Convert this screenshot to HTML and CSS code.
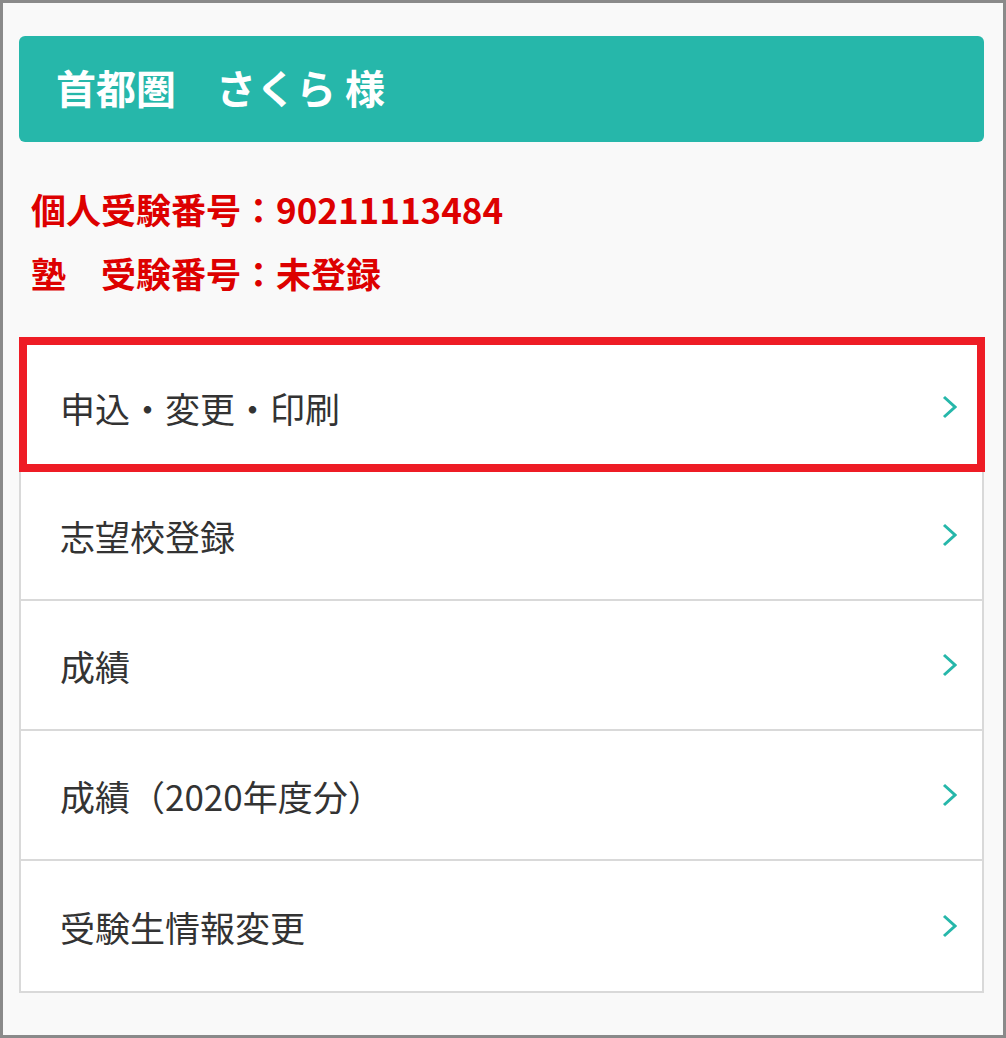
FILE: index.html
```
<!DOCTYPE html>
<html lang="ja">
<head>
    <meta charset="UTF-8">
    <meta name="viewport" content="width=device-width, initial-scale=1.0">
    <title>マイページ</title>
    <link rel="stylesheet" href="styles.css">
</head>
<body>
    <div class="page">
        <div class="user-header">首都圏　さくら 様</div>

        <div class="exam-info">
            <p>個人受験番号：90211113484</p>
            <p>塾　受験番号：未登録</p>
        </div>

        <ul class="menu">
            <li class="menu-item selected">
                <span>申込・変更・印刷</span>
                <svg class="chevron" width="15" height="24" viewBox="0 0 15 24"><polyline points="2,2 13,12 2,22" /></svg>
            </li>
            <li class="menu-item">
                <span>志望校登録</span>
                <svg class="chevron" width="15" height="24" viewBox="0 0 15 24"><polyline points="2,2 13,12 2,22" /></svg>
            </li>
            <li class="menu-item">
                <span>成績</span>
                <svg class="chevron" width="15" height="24" viewBox="0 0 15 24"><polyline points="2,2 13,12 2,22" /></svg>
            </li>
            <li class="menu-item">
                <span>成績（2020年度分）</span>
                <svg class="chevron" width="15" height="24" viewBox="0 0 15 24"><polyline points="2,2 13,12 2,22" /></svg>
            </li>
            <li class="menu-item">
                <span>受験生情報変更</span>
                <svg class="chevron" width="15" height="24" viewBox="0 0 15 24"><polyline points="2,2 13,12 2,22" /></svg>
            </li>
        </ul>
    </div>
</body>
</html>
```

FILE: styles.css
```
html, body {
    margin: 0;
    padding: 0;
}

body {
    font-family: "Noto Sans CJK JP", "Noto Sans", sans-serif;
    background-color: #f9f9f9;
    border: 3px solid #8a8a8a;
    box-sizing: border-box;
    height: 1038px;
    overflow: hidden;
}

.page {
    padding: 33px 19px 0 16px;
}

.user-header {
    background-color: #26b7aa;
    color: #ffffff;
    border-radius: 6px;
    height: 106px;
    box-sizing: border-box;
    display: flex;
    align-items: center;
    padding: 0 0 4px 37px;
    font-size: 40px;
    font-weight: bold;
    line-height: 1;
}

.exam-info {
    margin-top: 35px;
    padding-left: 12px;
}

.exam-info p {
    margin: 0;
    color: #dd0000;
    font-size: 35px;
    font-weight: bold;
    line-height: 64px;
}

.menu {
    list-style: none;
    margin: 36px 0 0 0;
    padding: 0;
    border: 2px solid #d9d9d9;
    background-color: #ffffff;
}

.menu-item {
    position: relative;
    height: 128px;
    box-sizing: border-box;
    display: flex;
    align-items: center;
    justify-content: space-between;
    padding: 0 25px 0 39px;
    border-bottom: 2px solid #d9d9d9;
    font-size: 35px;
    color: #333333;
    line-height: 1;
}

.menu-item:last-child {
    border-bottom: none;
    height: 128px;
}

.menu-item + .menu-item {
    height: 130px;
}

.menu-item.selected {
    padding-top: 2px;
}

.menu-item.selected::after {
    content: "";
    position: absolute;
    top: -6px;
    left: -2px;
    right: -3px;
    bottom: -3px;
    border: 8px solid #ee1c25;
}

.chevron polyline {
    fill: none;
    stroke: #26b7aa;
    stroke-width: 3;
}
```
